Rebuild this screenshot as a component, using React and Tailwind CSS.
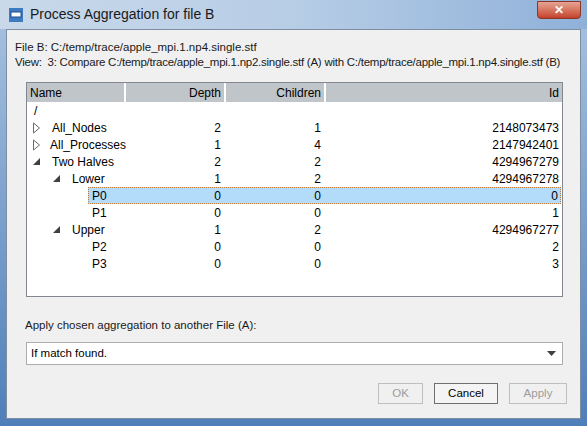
export default function App() {
  const rows = [
    { n: "/", ind: 0, tri: null, d: "", c: "", id: "" },
    { n: "All_Nodes", ind: 1, tri: "c", d: "2", c: "1", id: "2148073473" },
    { n: "All_Processes", ind: 1, tri: "c", d: "1", c: "4", id: "2147942401" },
    { n: "Two Halves", ind: 1, tri: "o", d: "2", c: "2", id: "4294967279" },
    { n: "Lower", ind: 2, tri: "o", d: "1", c: "2", id: "4294967278" },
    { n: "P0", ind: 3, tri: null, d: "0", c: "0", id: "0", sel: true },
    { n: "P1", ind: 3, tri: null, d: "0", c: "0", id: "1" },
    { n: "Upper", ind: 2, tri: "o", d: "1", c: "2", id: "4294967277" },
    { n: "P2", ind: 3, tri: null, d: "0", c: "0", id: "2" },
    { n: "P3", ind: 3, tri: null, d: "0", c: "0", id: "3" },
  ];
  const tri = (t) =>
    t === "c" ? (
      <svg width="9" height="12" viewBox="0 0 9 12"><path d="M1.5 1 L7.5 6 L1.5 11 Z" fill="white" stroke="#6b6b6b" /></svg>
    ) : t === "o" ? (
      <svg width="9" height="9" viewBox="0 0 9 9"><path d="M8 1 L8 8 L1 8 Z" fill="#404040" /></svg>
    ) : null;
  return (
    <div className="w-[587px] h-[426px] bg-gradient-to-b from-[#a9c3e0] to-[#4f7fb9] flex flex-col text-[11.5px] text-black" style={{ fontFamily: "'Liberation Sans', Arial, sans-serif" }}>
      <div className="h-[29px] flex items-center pl-[8px] bg-gradient-to-r from-[#c9d9ea] via-[#b7cde6] to-[#8fb1d9]">
        <svg width="16" height="16" viewBox="0 0 16 16"><rect x="1" y="1" width="14" height="14" fill="#3d7ac0" /><rect x="3" y="5" width="10" height="5" fill="white" stroke="#1f4f8f" /></svg>
        <span className="ml-[6px] text-[14px] text-[#1a1a1a]">Process Aggregation for file B</span>
        <div className="ml-auto mr-[6px] mt-[-10px] w-[44px] h-[18px] rounded-b-[4px] bg-gradient-to-b from-[#e5a493] to-[#c3412b] border border-[#8a3526] flex items-center justify-center text-white text-[12px] font-bold">✕</div>
      </div>
      <div className="mx-[6px] mb-[7px] flex-1 bg-[#f0f0f0] border border-[#7d8ea3] flex flex-col pl-[8px] pr-[12px]">
        <div className="mt-[10px] leading-[15px] text-[#1a1a1a]">File B: C:/temp/trace/apple_mpi.1.np4.single.stf</div>
        <div className="leading-[15px] text-[#1a1a1a] whitespace-pre tracking-[-0.25px]">View:  3: Compare C:/temp/trace/apple_mpi.1.np2.single.stf (A) with C:/temp/trace/apple_mpi.1.np4.single.stf (B)</div>
        <div className="ml-[11px] mt-[12px] w-[537px] h-[215px] bg-white border border-[#828790] text-[12px]">
          <div className="flex h-[19px] bg-white gap-[2px]">
            <div className="w-[97px] bg-[#c0c5c9] pl-[3px] flex items-center">Name</div>
            <div className="w-[98px] bg-[#c0c5c9] pr-[3px] flex items-center justify-end">Depth</div>
            <div className="w-[98px] bg-[#c0c5c9] pr-[3px] flex items-center justify-end">Children</div>
            <div className="flex-1 bg-[#c0c5c9] pr-[3px] flex items-center justify-end">Id</div>
          </div>
          {rows.map((r, i) => (
            <div key={i} className="flex h-[17px] items-center">
              <div className="w-[99px] flex items-center" style={{ paddingLeft: r.ind === 0 ? 3 : 0 }}>
                {r.ind > 0 && <div style={{ width: (r.ind - 1) * 20 + 5 }} />}
                {r.ind > 0 && <div className="w-[16px] flex items-center">{tri(r.tri)}</div>}
                {r.sel ? null : <span className="pl-[4px]">{r.n}</span>}
              </div>
              {r.sel ? (
                <div className="flex-1 -ml-[38px] mr-[1px] h-[17px] bg-[#b3dcfb] border border-dotted border-[#c07a3c] flex items-center">
                  <span className="w-[37px] pl-[3px]">{r.n}</span>
                  <span className="w-[98px] text-right pr-[3px]">{r.d}</span>
                  <span className="w-[100px] text-right pr-[3px]">{r.c}</span>
                  <span className="flex-1 text-right pr-[2px]">{r.id}</span>
                </div>
              ) : (
                <>
                  <div className="w-[98px] text-right pr-[3px]">{r.d}</div>
                  <div className="w-[100px] text-right pr-[3px]">{r.c}</div>
                  <div className="flex-1 text-right pr-[3px]">{r.id}</div>
                </>
              )}
            </div>
          ))}
        </div>
        <div className="mt-[20px] ml-[10px] text-[#1a1a1a]">Apply chosen aggregation to another File (A):</div>
        <div className="ml-[11px] mt-[8px] w-[537px] h-[23px] bg-white border border-[#adadad] flex items-center pl-[4px] pr-[6px]">
          <span>If match found.</span>
          <svg className="ml-auto" width="9" height="5" viewBox="0 0 9 5"><path d="M0 0 L9 0 L4.5 5 Z" fill="#404040" /></svg>
        </div>
        <div className="flex justify-end mt-[18px] gap-[11px] mr-[1px]">
          <div className="w-[45px] h-[21px] border border-[#bfbfbf] flex items-center justify-center text-[#9c9c9c]">OK</div>
          <div className="w-[64px] h-[21px] border border-[#707070] bg-[#f4f4f4] flex items-center justify-center">Cancel</div>
          <div className="w-[58px] h-[21px] border border-[#bfbfbf] flex items-center justify-center text-[#9c9c9c]">Apply</div>
        </div>
      </div>
    </div>
  );
}
